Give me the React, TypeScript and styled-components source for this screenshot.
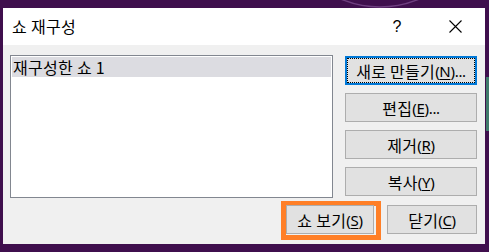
import React from "react";
import styled, { createGlobalStyle } from "styled-components";

const Global = createGlobalStyle`
  html, body { margin: 0; padding: 0; }
  body {
    background: #3f0f4d;
    font-family: "Noto Sans CJK KR", "Noto Sans", sans-serif;
    width: 489px;
    height: 252px;
    overflow: hidden;
  }
`;

const Desktop = styled.div`
  position: relative;
  width: 489px;
  height: 252px;
  padding: 8px 4px 8px 3px;
  box-sizing: border-box;
`;

const Backdrop = styled.svg`
  position: absolute;
  left: 0;
  top: 0;
  pointer-events: none;
`;

const Window = styled.div`
  position: relative;
  width: 482px;
  height: 236px;
  display: flex;
  flex-direction: column;
  background: #f0f0f0;
`;

const TitleBar = styled.div`
  height: 37px;
  background: #ffffff;
  display: flex;
  align-items: center;
  padding: 0 1px 0 9px;
  box-sizing: border-box;
`;

const Title = styled.div`
  flex: 1;
  font-size: 16px;
  line-height: 20px;
  letter-spacing: 0.3px;
  color: #000;
  margin-top: -1px;
`;

const TitleButton = styled.div`
  width: 58px;
  height: 37px;
  display: flex;
  align-items: center;
  justify-content: center;
  font-family: "Liberation Sans", sans-serif;
  font-size: 16px;
  color: #000;
`;

const Body = styled.div`
  flex: 1;
  display: flex;
  flex-direction: column;
  padding: 10px 8px 0 7px;
`;

const Main = styled.div`
  display: flex;
  gap: 12px;
`;

const ListBox = styled.div`
  width: 324px;
  height: 143px;
  box-sizing: border-box;
  border: 1px solid #828790;
  background: #ffffff;
  padding: 1px;
`;

const ListItem = styled.div<{ $selected?: boolean }>`
  height: 20px;
  line-height: 20px;
  font-size: 16px;
  letter-spacing: 0.3px;
  padding-left: 1px;
  color: #000;
  background: ${(p) => (p.$selected ? "#dcdce1" : "transparent")};
`;

const ButtonColumn = styled.div`
  display: flex;
  flex-direction: column;
  gap: 8px;
  padding-top: 1px;
`;

const Button = styled.div<{ $w: number; $default?: boolean }>`
  position: relative;
  width: ${(p) => p.$w}px;
  height: 29px;
  box-sizing: border-box;
  background: #e1e1e1;
  border: ${(p) => (p.$default ? "2px solid #0078d7" : "1px solid #adadad")};
  display: flex;
  align-items: center;
  justify-content: center;
  font-size: 16px;
  line-height: 20px;
  letter-spacing: 0.3px;
  color: #000;
  white-space: nowrap;
  ${(p) =>
    p.$default
      ? `&::after {
          content: "";
          position: absolute;
          inset: 0;
          border: 1px dotted #000;
        }`
      : ""}
  u {
    text-decoration-thickness: 1px;
    text-underline-offset: 2px;
  }
`;

const Mn = styled.span`
  font-family: "Noto Sans", sans-serif;
  font-size: 15px;
  letter-spacing: -0.3px;
`;

const Footer = styled.div`
  display: flex;
  justify-content: flex-end;
  gap: 13px;
  margin-top: 7px;
`;

const Highlight = styled.div`
  position: relative;
  &::before {
    content: "";
    position: absolute;
    left: -5px;
    top: -4px;
    right: -7px;
    bottom: -6px;
    border: 5px solid #ff7f27;
    pointer-events: none;
  }
`;

const Key: React.FC<{ k: string; tail?: string }> = ({ k, tail }) => (
  <Mn>
    (<u>{k}</u>){tail}
  </Mn>
);

export default function App() {
  return (
    <>
      <Global />
      <Desktop>
        <Backdrop width="489" height="252" viewBox="0 0 489 252">
          <circle cx="380" cy="-94" r="101" fill="none" stroke="#6f3f80" strokeWidth="1.5" />
          <rect x="486" y="77" width="3" height="54" fill="#3f7a6a" />
        </Backdrop>
        <Window>
          <TitleBar>
            <Title>쇼 재구성</Title>
            <TitleButton>?</TitleButton>
            <TitleButton>
              <svg width="13" height="13" viewBox="0 0 13 13">
                <path d="M0.5 0.5 L12.5 12.5 M12.5 0.5 L0.5 12.5" stroke="#000" strokeWidth="1.1" />
              </svg>
            </TitleButton>
          </TitleBar>
          <Body>
            <Main>
              <ListBox>
                <ListItem $selected>재구성한 쇼 1</ListItem>
              </ListBox>
              <ButtonColumn>
                <Button $w={132} $default>
                  새로 만들기<Key k="N" tail="..." />
                </Button>
                <Button $w={132}>
                  편집<Key k="E" tail="..." />
                </Button>
                <Button $w={132}>
                  제거<Key k="R" />
                </Button>
                <Button $w={132}>
                  복사<Key k="Y" />
                </Button>
              </ButtonColumn>
            </Main>
            <Footer>
              <Highlight>
                <Button $w={88}>
                  쇼 보기<Key k="S" />
                </Button>
              </Highlight>
              <Button $w={90}>
                닫기<Key k="C" />
              </Button>
            </Footer>
          </Body>
        </Window>
      </Desktop>
    </>
  );
}
